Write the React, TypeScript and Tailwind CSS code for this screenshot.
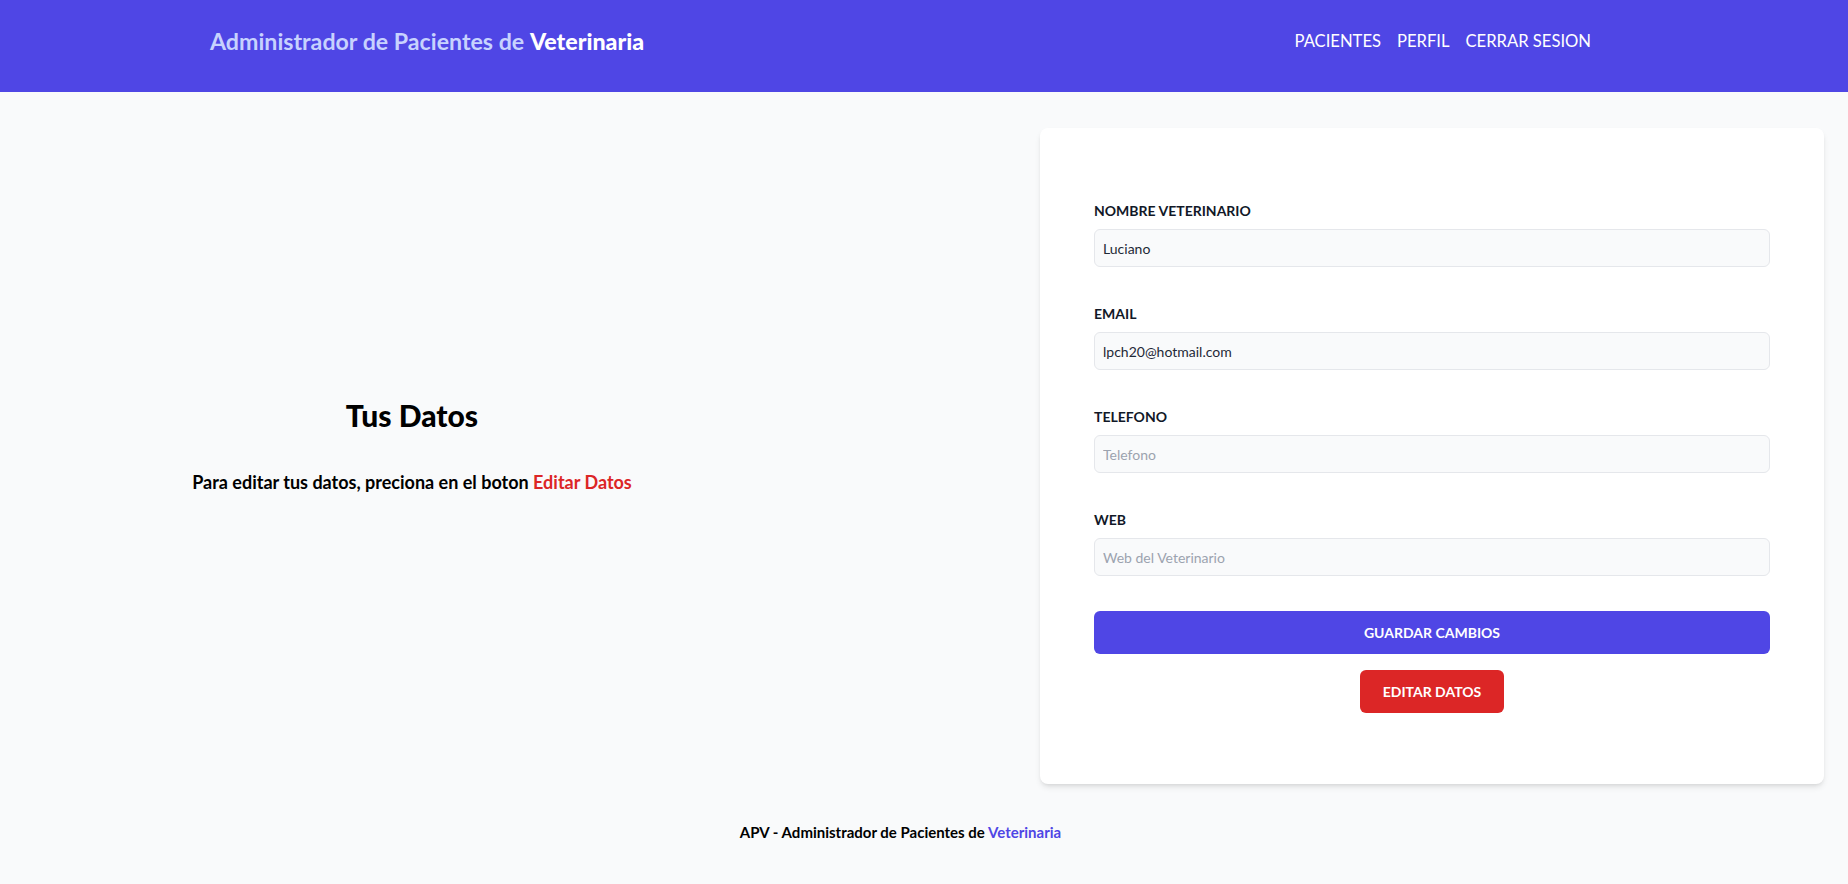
const fields = [
  { label: 'Nombre Veterinario', value: 'Luciano', placeholder: 'Nombre' },
  { label: 'Email', value: 'lpch20@hotmail.com', placeholder: 'Email' },
  { label: 'Telefono', value: '', placeholder: 'Telefono' },
  { label: 'Web', value: '', placeholder: 'Web del Veterinario' },
];

export default function App() {
  return (
    <div className="min-h-screen bg-[#f9fafb] font-['Lato','Noto_Sans',sans-serif]">
      {/* Header */}
      <header className="bg-[#4f46e5] h-[92px] pt-[25px]">
        <div className="flex items-center justify-between pl-[210px] pr-[257px]">
          <h1 className="text-[23.2px] leading-8 font-bold text-[#c7d2fe]">
            Administrador de Pacientes de <span className="text-white font-black">Veterinaria</span>
          </h1>
          <nav className="flex gap-4 text-[16.6px] leading-8 text-white">
            <a href="#">PACIENTES</a>
            <a href="#">PERFIL</a>
            <button type="button">CERRAR SESION</button>
          </nav>
        </div>
      </header>

      <main className="flex mt-9">
        {/* Left */}
        <div className="w-[824px] flex flex-col items-center justify-center pb-[21px]">
          <h2 className="text-[30px] leading-9 font-black text-black">Tus Datos</h2>
          <p className="mt-[37px] text-[18px] leading-6 font-bold text-black">
            Para editar tus datos, preciona en el boton <span className="text-[#dc2626]">Editar Datos</span>
          </p>
        </div>

        {/* Form card */}
        <div className="ml-[216px] w-[784px] bg-white rounded-lg shadow-md px-[54px] pt-[73px] pb-[71px]">
          <form>
            <div className="space-y-[37px]">
              {fields.map((f) => (
                <div key={f.label}>
                  <label className="block uppercase font-bold text-[14px] leading-5 text-[#111827]">{f.label}</label>
                  <input
                    type="text"
                    defaultValue={f.value}
                    placeholder={f.placeholder}
                    className="mt-2 w-full h-[38px] px-2 text-sm text-[#1f2937] placeholder-[#9ca3af] bg-[#f9fafb] border border-[#e5e7eb] rounded-md outline-none"
                  />
                </div>
              ))}
            </div>
            <button
              type="button"
              className="mt-[35px] w-full h-[43px] bg-[#4f46e5] text-white uppercase font-bold text-sm rounded-md"
            >
              Guardar Cambios
            </button>
            <div className="flex justify-center mt-4">
              <button
                type="button"
                className="w-[144px] h-[43px] bg-[#dc2626] text-white uppercase font-bold text-sm rounded-md"
              >
                Editar Datos
              </button>
            </div>
          </form>
        </div>
      </main>

      <footer className="pt-[38px] pb-[43px] pl-[210px] pr-[257px]">
        <p className="text-center text-[15px] leading-5 font-bold text-black">
          APV - Administrador de Pacientes de <span className="text-[#4f46e5]">Veterinaria</span>
        </p>
      </footer>
    </div>
  );
}
